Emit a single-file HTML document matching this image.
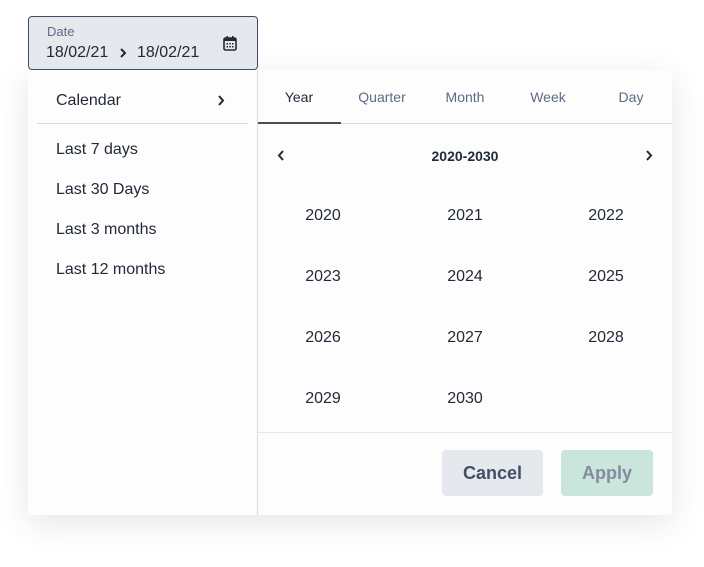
<!DOCTYPE html><html><head><style>
body{margin:0;width:704px;height:567px;background:#fff;font-family:"Liberation Sans",sans-serif;position:relative;overflow:hidden}
.a{position:absolute}
.inp{left:28px;top:16px;width:230px;height:54px;background:#e5e8ed;border:1px solid #3f4a63;border-radius:4px;box-sizing:border-box;z-index:2}
.panel{left:28px;top:70px;width:644px;height:445px;background:#fdfdfe;box-shadow:0 8px 30px rgba(40,50,70,.12)}
.t{color:#222a36;font-size:16px}
.tab{top:89px;font-size:14px;color:#5e6a86;width:82px;text-align:center}
.yr{font-size:16px;color:#222a36;width:80px;text-align:center}
</style></head><body>
<div class="a inp">
<div class="a" style="left:18px;top:7px;font-size:13px;color:#5e6a86">Date</div>
<div class="a" style="left:17px;top:27px;font-size:16px;color:#222a36">18/02/21</div>
<svg class="a" style="left:90px;top:31px" width="8" height="10" viewBox="0 0 8 10"><path d="M2 1l4 4-4 4" fill="none" stroke="#222a36" stroke-width="2"/></svg>
<div class="a" style="left:108px;top:27px;font-size:16px;color:#222a36">18/02/21</div>
<svg class="a" style="left:194px;top:19px" width="14" height="15" viewBox="0 0 14 15"><rect x="1" y="2" width="12" height="12" rx="1.5" fill="none" stroke="#222a36" stroke-width="1.6"/><rect x="1" y="2" width="12" height="3" fill="#222a36"/><rect x="3.5" y="0" width="1.5" height="3" fill="#222a36"/><rect x="9" y="0" width="1.5" height="3" fill="#222a36"/><g fill="#222a36"><rect x="3.5" y="7" width="1.5" height="1.5"/><rect x="6.3" y="7" width="1.5" height="1.5"/><rect x="9" y="7" width="1.5" height="1.5"/><rect x="3.5" y="10" width="1.5" height="1.5"/><rect x="6.3" y="10" width="1.5" height="1.5"/><rect x="9" y="10" width="1.5" height="1.5"/></g></svg>
</div>
<div class="a panel"></div>
<div class="a" style="left:257px;top:70px;width:1px;height:445px;background:#d8dbe2"></div>
<div class="a t" style="left:56px;top:92px">Calendar</div>
<svg class="a" style="left:217px;top:95px" width="8" height="11" viewBox="0 0 8 11"><path d="M2 1l4 4.5-4 4.5" fill="none" stroke="#222a36" stroke-width="2"/></svg>
<div class="a" style="left:37px;top:123px;width:211px;height:1px;background:#d8dbe2"></div>
<div class="a t" style="left:56px;top:141px">Last 7 days</div>
<div class="a t" style="left:56px;top:181px">Last 30 Days</div>
<div class="a t" style="left:56px;top:221px">Last 3 months</div>
<div class="a t" style="left:56px;top:261px">Last 12 months</div>
<div class="a tab" style="left:258px;color:#222a36">Year</div>
<div class="a tab" style="left:341px">Quarter</div>
<div class="a tab" style="left:424px">Month</div>
<div class="a tab" style="left:507px">Week</div>
<div class="a tab" style="left:590px">Day</div>
<div class="a" style="left:258px;top:123px;width:414px;height:1px;background:#d8dbe2"></div>
<div class="a" style="left:258px;top:122px;width:83px;height:2px;background:#4a4f5a"></div>
<svg class="a" style="left:277px;top:150px" width="8" height="11" viewBox="0 0 8 11"><path d="M6 1l-4 4.5 4 4.5" fill="none" stroke="#222a36" stroke-width="2"/></svg>
<svg class="a" style="left:645px;top:150px" width="8" height="11" viewBox="0 0 8 11"><path d="M2 1l4 4.5-4 4.5" fill="none" stroke="#222a36" stroke-width="2"/></svg>
<div class="a" style="left:405px;top:148px;width:120px;text-align:center;font-size:14px;font-weight:bold;color:#222a36">2020-2030</div>
<div class="a yr" style="left:283px;top:207px">2020</div><div class="a yr" style="left:425px;top:207px">2021</div><div class="a yr" style="left:566px;top:207px">2022</div>
<div class="a yr" style="left:283px;top:268px">2023</div><div class="a yr" style="left:425px;top:268px">2024</div><div class="a yr" style="left:566px;top:268px">2025</div>
<div class="a yr" style="left:283px;top:329px">2026</div><div class="a yr" style="left:425px;top:329px">2027</div><div class="a yr" style="left:566px;top:329px">2028</div>
<div class="a yr" style="left:283px;top:390px">2029</div><div class="a yr" style="left:425px;top:390px">2030</div>
<div class="a" style="left:258px;top:432px;width:414px;height:1px;background:#e6e8ec"></div>
<div class="a" style="left:442px;top:450px;width:101px;height:46px;background:#e5e8ed;border-radius:4px;text-align:center;line-height:46px;font-size:18px;font-weight:bold;color:#444e66">Cancel</div>
<div class="a" style="left:561px;top:450px;width:92px;height:46px;background:#c9e5dc;border-radius:4px;text-align:center;line-height:46px;font-size:18px;font-weight:bold;color:#838ba0">Apply</div>
</body></html>
